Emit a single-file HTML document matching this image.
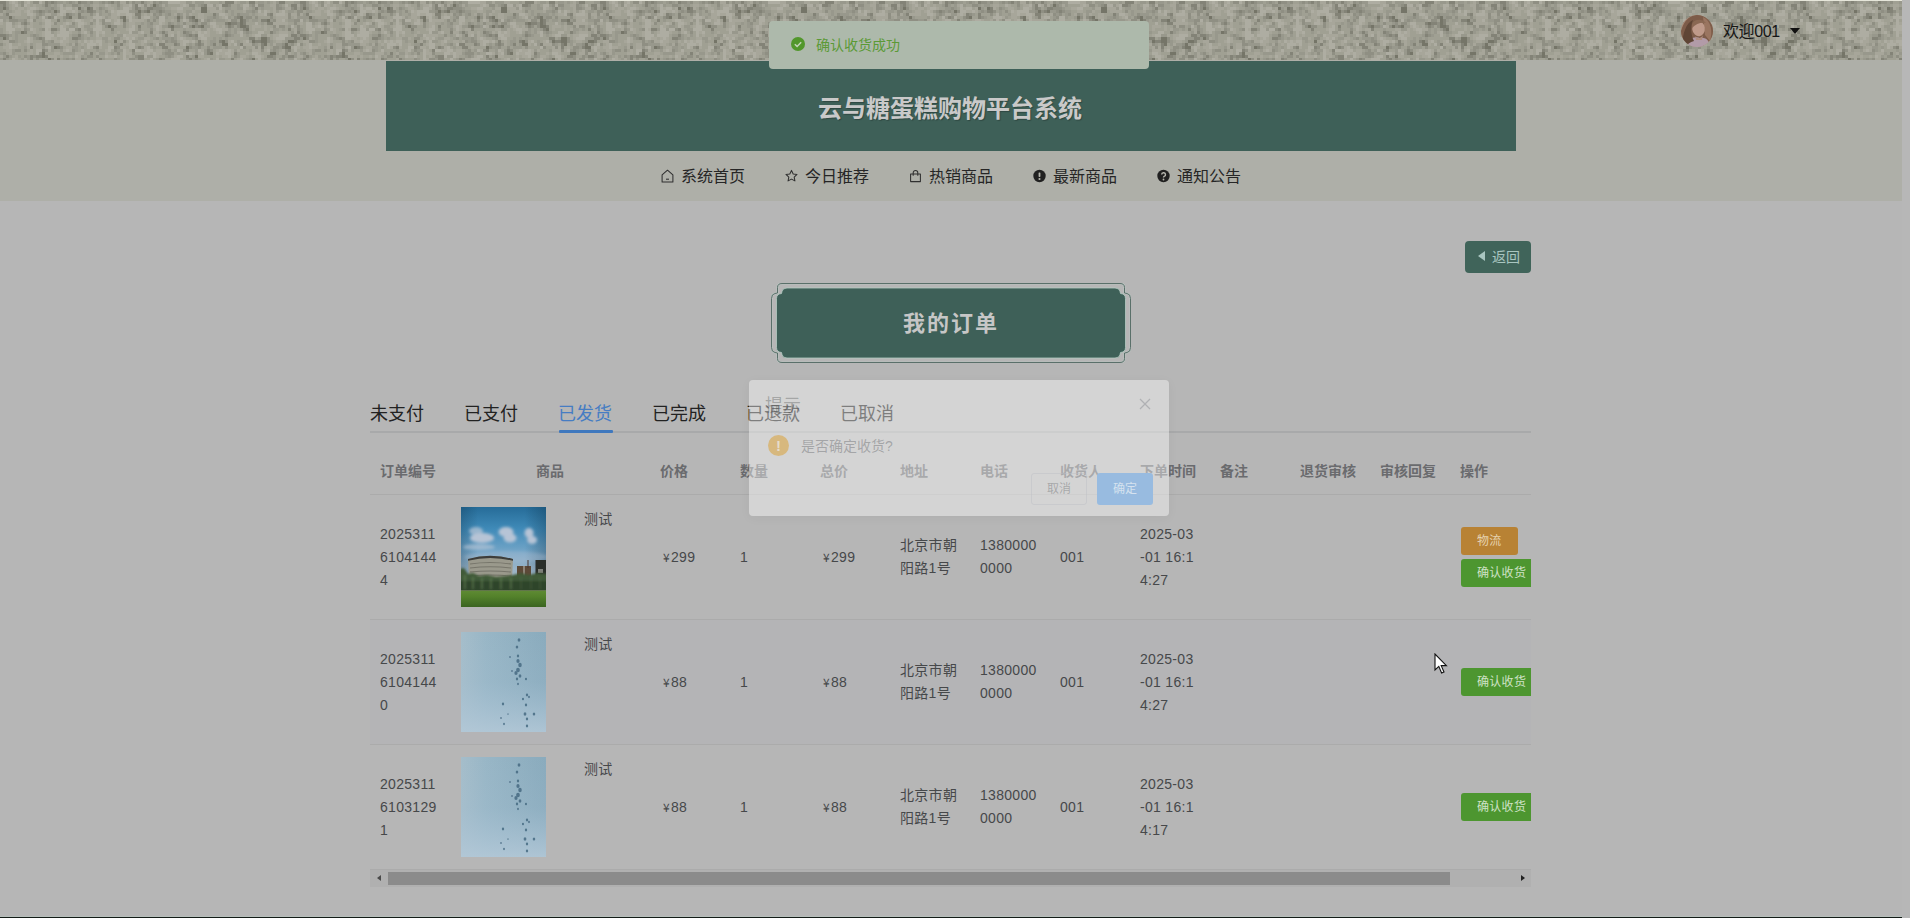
<!DOCTYPE html>
<html lang="zh-CN">
<head>
<meta charset="utf-8">
<title>云与糖蛋糕购物平台系统</title>
<style>
*{box-sizing:border-box;margin:0;padding:0}
html,body{width:1910px;height:918px;overflow:hidden}
body{background:#b7b7b7;font-family:"Liberation Sans","Noto Sans CJK SC",sans-serif;color:#454749;position:relative}
.page{position:absolute;left:0;top:0;width:1902px;height:918px;overflow:hidden;background:#b6b6b6}
/* top strip */
.topline{position:absolute;left:0;top:0;width:1902px;height:1px;background:#e6e6da;z-index:2}
.noise{position:absolute;left:0;top:1px;width:1902px;height:59px;background:#a0a093;overflow:hidden}
.noise svg{position:absolute;left:0;top:0}
.head{position:absolute;left:0;top:60px;width:1902px;height:141px;background:#aeafa8}
.titlebar{position:absolute;left:386px;top:61px;width:1130px;height:90px;background:#3e6058;color:#c9c9c9;font-size:24px;font-weight:700;text-align:center;line-height:90px;letter-spacing:0}
.titlebar span{position:relative;top:3px;left:-1px;text-shadow:1px 1px 1px rgba(0,0,0,.25)}
.user{position:absolute;left:1681px;top:15px;height:32px;display:flex;align-items:center;font-size:16px;color:#161616}
.user .nm{position:relative;top:-1px}
.avatar{width:32px;height:32px;border-radius:50%;overflow:hidden;display:block}
.user .nm{margin-left:10px;letter-spacing:-0.4px}
.user .caret{margin-left:10px;width:0;height:0;border-left:5px solid transparent;border-right:5px solid transparent;border-top:6px solid #111}
/* nav */
.nav{position:absolute;left:641px;top:150px;height:49px;display:flex}
.nav a{display:flex;align-items:center;width:124px;padding:0 20px;height:49px;font-size:16px;color:#262626;text-decoration:none;white-space:nowrap}
.nav a svg{width:13px;height:14px;margin-right:7px;flex:none;position:relative;top:1px}
/* toast */
.toast{position:absolute;left:769px;top:21px;width:380px;height:48px;padding-bottom:2px;border-radius:4px;background:#adb9ab;display:flex;align-items:center;padding-left:22px;font-size:14px;color:#5b9a36;z-index:20}
.toast svg{width:14px;height:14px;margin-right:11px}
/* back button */
.back{position:absolute;left:1465px;top:241px;width:66px;height:32px;padding-bottom:2px;border-radius:4px;background:#40645a;color:#a9c6c0;font-size:14px;display:flex;align-items:center;padding-left:13px}
.back i{width:0;height:0;border-top:5.5px solid transparent;border-bottom:5.5px solid transparent;border-right:7px solid #a9c6c0;margin-right:7px}
/* page title */
.ptitle{position:absolute;left:771px;top:283px;width:360px;height:80px}
.ptitle svg{position:absolute;left:0;top:0}
.ptitle span{position:absolute;left:0;top:1px;width:360px;height:80px;line-height:80px;text-align:center;font-size:22px;font-weight:700;color:#c6c6c6;letter-spacing:2px;padding-left:0px}
/* tabs */
.tabs{position:absolute;left:370px;top:393px;width:1161px;height:40px;border-bottom:2px solid #a8a9aa;display:flex}
.tabs div{width:94px;height:40px;line-height:42px;font-size:18px;color:#222;white-space:nowrap}
.tabs div.on{color:#467dc3}
.tabs .bar{position:absolute;left:189px;top:37px;width:54px;height:3px;background:#3f78be;border-radius:1px}
/* table */
.tbl{position:absolute;left:370px;top:448px;width:1161px;height:440px;overflow:hidden}
table{border-collapse:separate;border-spacing:0;table-layout:fixed;width:1241px;font-size:14px}
th{height:47px;text-align:left;padding:0 10px 2px;color:#6a6b6e;font-weight:700;border-bottom:1px solid #ababab;vertical-align:middle;white-space:nowrap;font-size:14px}
td{height:125px;padding:0 10px;line-height:23px;color:#46484a;border-bottom:1px solid #ababab;vertical-align:middle;word-break:break-all;letter-spacing:.3px}
tr.s td{background:#b4b4b6}
.goods{display:flex;align-items:flex-start;padding-left:1px}
.goods svg{width:85px;height:100px;display:block;flex:none}
.goods span{margin-left:38px;margin-top:1px;line-height:23px}
.btn{display:block;height:28px;line-height:28px;border-radius:3px;font-size:12px;color:#cfe2c6;padding:0 16px;white-space:nowrap}
.ops{display:flex;flex-direction:column;align-items:flex-start;gap:4px;padding-left:1px}
.y{font-family:"Noto Sans CJK SC",sans-serif;margin-left:3px;margin-right:1px;font-size:12px}
.g{background:#4d9630}
.o{background:#b88234;color:#e6d3b0}
.sb{position:absolute;left:0;top:422px;width:1161px;height:17px;background:#b0b0b0}
.sb .th{position:absolute;left:18px;top:2px;width:1062px;height:13px;background:#8b8b8b}
.sb .l,.sb .r{position:absolute;top:5px;width:0;height:0;border-top:3.5px solid transparent;border-bottom:3.5px solid transparent}
.sb .l{left:7px;border-right:4px solid #4a4a4a}
.sb .r{right:6px;border-left:4px solid #222}
/* dialog */
.dlg{position:absolute;left:749px;top:380px;width:420px;height:136px;border-radius:4px;background:rgba(255,255,255,.42);z-index:30;box-shadow:0 2px 12px rgba(0,0,0,.04)}
.dlg .t{position:absolute;left:16px;top:14px;font-size:18px;color:rgba(48,49,51,.3);line-height:24px}
.dlg .x{position:absolute;left:389px;top:17px;width:14px;height:14px}
.dlg .ic{position:absolute;left:19px;top:55px;width:21px;height:21px;border-radius:50%;background:#d7b87e;color:#e6dccb;text-align:center;font-size:15px;font-weight:700;line-height:21px}
.dlg .m{position:absolute;left:52px;top:54px;font-size:14px;line-height:24px;color:rgba(96,98,102,.42)}
.dlg .b1,.dlg .b2{position:absolute;top:93px;width:56px;height:32px;border-radius:3px;font-size:12px;line-height:30px;text-align:center}
.dlg .b1{left:282px;border:1px solid rgba(190,192,198,.5);color:rgba(96,98,102,.4)}
.dlg .b2{left:348px;background:#98bbe0;color:#d5e2ef;line-height:32px}
.bot1{position:absolute;left:0;top:916px;width:1902px;height:1px;background:#b6bfbb}
.bot2{position:absolute;left:0;top:917px;width:1902px;height:1px;background:#141c18}
.cursor{position:absolute;left:1434px;top:653px;width:14px;height:22px;z-index:40}
</style>
</head>
<body>
<div class="page">
<svg width="0" height="0" style="position:absolute"><defs>
<linearGradient id="lb" x1="0" y1="0" x2="1" y2="0"><stop offset="0" stop-color="#a5bdca"/><stop offset=".3" stop-color="#98b6c6"/><stop offset="1" stop-color="#8aabbd"/></linearGradient>
<linearGradient id="lb2" x1="0" y1="0" x2="0" y2="1"><stop offset="0" stop-color="#a9c3d6" stop-opacity="0"/><stop offset=".5" stop-color="#a9c3d6" stop-opacity=".15"/><stop offset="1" stop-color="#b4c9d8" stop-opacity=".85"/></linearGradient>
<filter id="bl3" x="-50%" y="-50%" width="200%" height="200%"><feGaussianBlur stdDeviation=".75"/></filter>
<symbol id="drops" viewBox="0 0 85 100"><rect width="85" height="100" fill="url(#lb)"/><rect width="85" height="100" fill="url(#lb2)"/><g fill="#466a82" opacity=".85" filter="url(#bl3)"><ellipse cx="58" cy="8" rx="1.39" ry="1.74"/><ellipse cx="56" cy="15" rx="1.28" ry="1.59"/><ellipse cx="57" cy="24" rx="1.16" ry="1.45"/><ellipse cx="57" cy="29" rx="1.62" ry="2.03"/><ellipse cx="59" cy="33" rx="1.74" ry="2.17"/><ellipse cx="57" cy="38" rx="1.86" ry="2.32"/><ellipse cx="55" cy="41" rx="1.62" ry="2.03"/><ellipse cx="59" cy="44" rx="1.39" ry="1.74"/><ellipse cx="56" cy="47" rx="1.16" ry="1.45"/><ellipse cx="51" cy="39" rx="0.81" ry="1.01"/><ellipse cx="65" cy="47" rx="1.04" ry="1.30"/><ellipse cx="66" cy="63" rx="1.16" ry="1.45"/><ellipse cx="62" cy="67" rx="1.04" ry="1.30"/><ellipse cx="68" cy="65" rx="0.93" ry="1.16"/><ellipse cx="42" cy="72" rx="1.16" ry="1.45"/><ellipse cx="65" cy="73" rx="1.16" ry="1.45"/><ellipse cx="64" cy="82" rx="1.39" ry="1.74"/><ellipse cx="73" cy="82" rx="1.28" ry="1.59"/><ellipse cx="66" cy="87" rx="1.16" ry="1.45"/><ellipse cx="40" cy="86" rx="0.81" ry="1.01"/><ellipse cx="43" cy="92" rx="0.93" ry="1.16"/><ellipse cx="66" cy="94" rx="1.16" ry="1.45"/><ellipse cx="47" cy="82" rx="0.70" ry="0.87"/><ellipse cx="49" cy="25" rx="0.81" ry="1.01"/><ellipse cx="57" cy="52" rx="0.93" ry="1.16"/></g></symbol>
</defs></svg>
  <div class="topline"></div>
  <div class="noise">
    <svg width="1902" height="59"><defs><pattern id="nzp" width="300" height="60" patternUnits="userSpaceOnUse"><rect width="300" height="60" fill="#a0a093"/><path fill="#747468" d="M153 3h3v3h-3zM3 6h3v3h-3zM78 6h3v3h-3zM87 6h3v3h-3zM201 6h6v3h-6zM54 9h3v3h-3zM138 9h3v3h-3zM147 9h3v3h-3zM201 9h6v3h-6zM9 15h3v3h-3zM69 15h3v3h-3zM123 15h3v3h-3zM177 15h3v3h-3zM192 15h3v3h-3zM240 15h3v3h-3zM123 18h3v3h-3zM195 18h3v3h-3zM240 18h3v3h-3zM267 18h3v3h-3zM228 21h3v3h-3zM240 21h3v3h-3zM108 24h3v3h-3zM171 24h3v3h-3zM192 24h3v3h-3zM201 24h3v3h-3zM240 24h6v3h-6zM246 27h3v3h-3zM21 30h3v3h-3zM3 36h3v3h-3zM261 36h6v3h-6zM114 39h3v3h-3zM222 39h3v3h-3zM252 39h3v3h-3zM261 39h6v3h-6zM288 39h6v3h-6zM222 42h6v3h-6zM264 42h3v3h-3zM285 42h3v3h-3zM54 45h3v3h-3zM186 45h3v3h-3zM285 45h6v3h-6zM42 51h3v3h-3zM210 51h3v3h-3zM270 51h6v3h-6zM42 54h3v3h-3zM195 54h3v3h-3zM48 57h3v3h-3zM252 57h3v3h-3z"/><path fill="#838377" d="M0 0h6v3h-6zM45 0h3v3h-3zM51 0h3v3h-3zM78 0h3v3h-3zM111 0h3v3h-3zM141 0h3v3h-3zM225 0h9v3h-9zM249 0h6v3h-6zM279 0h6v3h-6zM3 3h3v3h-3zM45 3h3v3h-3zM135 3h3v3h-3zM204 3h3v3h-3zM222 3h6v3h-6zM291 3h6v3h-6zM90 6h3v3h-3zM135 6h3v3h-3zM147 6h6v3h-6zM255 6h3v3h-3zM294 6h3v3h-3zM39 9h3v3h-3zM87 9h6v3h-6zM144 9h3v3h-3zM159 9h3v3h-3zM6 12h3v3h-3zM66 12h3v3h-3zM78 12h3v3h-3zM135 12h6v3h-6zM213 12h3v3h-3zM270 12h3v3h-3zM48 15h3v3h-3zM66 15h3v3h-3zM78 15h3v3h-3zM120 15h3v3h-3zM138 15h3v3h-3zM189 15h3v3h-3zM237 15h3v3h-3zM57 18h3v3h-3zM177 18h3v3h-3zM192 18h3v3h-3zM243 18h3v3h-3zM261 18h6v3h-6zM24 21h3v3h-3zM225 21h3v3h-3zM231 21h6v3h-6zM243 21h3v3h-3zM267 21h6v3h-6zM138 24h3v3h-3zM168 24h3v3h-3zM198 24h3v3h-3zM228 24h3v3h-3zM246 24h3v3h-3zM51 27h6v3h-6zM78 27h3v3h-3zM111 27h3v3h-3zM171 27h3v3h-3zM243 27h3v3h-3zM288 27h3v3h-3zM24 30h3v3h-3zM150 30h3v3h-3zM162 30h3v3h-3zM183 30h3v3h-3zM270 30h3v3h-3zM297 30h3v3h-3zM0 33h6v3h-6zM78 33h3v3h-3zM165 33h3v3h-3zM189 33h3v3h-3zM195 33h3v3h-3zM225 33h3v3h-3zM291 33h6v3h-6zM39 36h3v3h-3zM72 36h6v3h-6zM249 36h6v3h-6zM294 36h6v3h-6zM198 39h3v3h-3zM219 39h3v3h-3zM255 39h6v3h-6zM294 39h3v3h-3zM120 42h3v3h-3zM159 42h6v3h-6zM174 42h3v3h-3zM198 42h3v3h-3zM213 42h3v3h-3zM240 42h3v3h-3zM261 42h3v3h-3zM30 45h3v3h-3zM57 45h3v3h-3zM96 45h3v3h-3zM114 45h3v3h-3zM138 45h3v3h-3zM162 45h6v3h-6zM261 45h3v3h-3zM282 45h3v3h-3zM42 48h3v3h-3zM132 48h3v3h-3zM186 48h3v3h-3zM207 48h3v3h-3zM288 48h3v3h-3zM90 51h3v3h-3zM207 51h3v3h-3zM234 51h3v3h-3zM6 54h3v3h-3zM30 54h3v3h-3zM36 54h6v3h-6zM45 54h3v3h-3zM138 54h6v3h-6zM186 54h3v3h-3zM267 54h6v3h-6zM288 54h6v3h-6zM3 57h3v3h-3zM30 57h3v3h-3zM57 57h3v3h-3zM81 57h3v3h-3zM99 57h3v3h-3zM138 57h6v3h-6zM159 57h3v3h-3zM189 57h3v3h-3zM231 57h3v3h-3z"/><path fill="#8f8f83" d="M21 0h3v3h-3zM33 0h6v3h-6zM48 0h3v3h-3zM54 0h3v3h-3zM69 0h3v3h-3zM81 0h6v3h-6zM90 0h3v3h-3zM102 0h3v3h-3zM108 0h3v3h-3zM117 0h3v3h-3zM126 0h3v3h-3zM132 0h3v3h-3zM153 0h3v3h-3zM159 0h3v3h-3zM0 3h3v3h-3zM21 3h3v3h-3zM72 3h6v3h-6zM117 3h3v3h-3zM144 3h3v3h-3zM156 3h3v3h-3zM189 3h6v3h-6zM201 3h3v3h-3zM228 3h3v3h-3zM252 3h3v3h-3zM258 3h6v3h-6zM276 3h3v3h-3zM0 6h3v3h-3zM6 6h3v3h-3zM51 6h3v3h-3zM99 6h3v3h-3zM138 6h3v3h-3zM153 6h9v3h-9zM276 6h6v3h-6zM291 6h3v3h-3zM0 9h3v3h-3zM36 9h3v3h-3zM42 9h3v3h-3zM48 9h3v3h-3zM57 9h3v3h-3zM81 9h3v3h-3zM93 9h3v3h-3zM105 9h3v3h-3zM135 9h3v3h-3zM141 9h3v3h-3zM156 9h3v3h-3zM162 9h3v3h-3zM225 9h3v3h-3zM252 9h3v3h-3zM297 9h3v3h-3zM39 12h3v3h-3zM69 12h3v3h-3zM90 12h3v3h-3zM153 12h3v3h-3zM159 12h3v3h-3zM168 12h3v3h-3zM177 12h3v3h-3zM237 12h3v3h-3zM267 12h3v3h-3zM288 12h3v3h-3zM297 12h3v3h-3zM36 15h3v3h-3zM51 15h3v3h-3zM63 15h3v3h-3zM81 15h3v3h-3zM156 15h3v3h-3zM180 15h3v3h-3zM186 15h3v3h-3zM213 15h3v3h-3zM234 15h3v3h-3zM246 15h6v3h-6zM255 15h3v3h-3zM270 15h3v3h-3zM288 15h3v3h-3zM9 18h9v3h-9zM24 18h3v3h-3zM33 18h3v3h-3zM102 18h3v3h-3zM147 18h3v3h-3zM153 18h3v3h-3zM189 18h3v3h-3zM207 18h3v3h-3zM231 18h6v3h-6zM273 18h3v3h-3zM294 18h6v3h-6zM21 21h3v3h-3zM54 21h3v3h-3zM72 21h3v3h-3zM90 21h3v3h-3zM102 21h3v3h-3zM123 21h3v3h-3zM150 21h3v3h-3zM168 21h3v3h-3zM183 21h3v3h-3zM195 21h3v3h-3zM201 21h6v3h-6zM237 21h3v3h-3zM294 21h3v3h-3zM105 24h3v3h-3zM111 24h6v3h-6zM123 24h3v3h-3zM174 24h6v3h-6zM189 24h3v3h-3zM195 24h3v3h-3zM231 24h3v3h-3zM237 24h3v3h-3zM273 24h3v3h-3zM279 24h6v3h-6zM297 24h3v3h-3zM24 27h3v3h-3zM42 27h3v3h-3zM75 27h3v3h-3zM138 27h3v3h-3zM150 27h3v3h-3zM297 27h3v3h-3zM90 30h3v3h-3zM186 30h3v3h-3zM225 30h3v3h-3zM246 30h3v3h-3zM6 33h3v3h-3zM33 33h3v3h-3zM144 33h3v3h-3zM186 33h3v3h-3zM192 33h3v3h-3zM228 33h3v3h-3zM6 36h3v3h-3zM36 36h3v3h-3zM42 36h3v3h-3zM78 36h3v3h-3zM114 36h6v3h-6zM156 36h3v3h-3zM171 36h3v3h-3zM195 36h3v3h-3zM267 36h3v3h-3zM9 39h6v3h-6zM42 39h3v3h-3zM51 39h3v3h-3zM123 39h3v3h-3zM165 39h3v3h-3zM171 39h6v3h-6zM225 39h3v3h-3zM267 39h3v3h-3zM0 42h3v3h-3zM42 42h6v3h-6zM75 42h3v3h-3zM150 42h3v3h-3zM177 42h3v3h-3zM195 42h3v3h-3zM201 42h3v3h-3zM252 42h3v3h-3zM282 42h3v3h-3zM291 42h3v3h-3zM60 45h3v3h-3zM93 45h3v3h-3zM117 45h3v3h-3zM141 45h3v3h-3zM189 45h3v3h-3zM198 45h3v3h-3zM207 45h3v3h-3zM225 45h3v3h-3zM243 45h3v3h-3zM255 45h3v3h-3zM273 45h6v3h-6zM15 48h6v3h-6zM24 48h3v3h-3zM45 48h3v3h-3zM72 48h3v3h-3zM114 48h3v3h-3zM168 48h3v3h-3zM183 48h3v3h-3zM210 48h3v3h-3zM261 48h3v3h-3zM273 48h3v3h-3zM285 48h3v3h-3zM3 51h3v3h-3zM39 51h3v3h-3zM117 51h3v3h-3zM132 51h3v3h-3zM165 51h9v3h-9zM285 51h3v3h-3zM24 54h3v3h-3zM33 54h3v3h-3zM87 54h6v3h-6zM96 54h3v3h-3zM135 54h3v3h-3zM168 54h3v3h-3zM234 54h3v3h-3zM273 54h3v3h-3zM282 54h3v3h-3zM36 57h3v3h-3zM51 57h3v3h-3zM66 57h3v3h-3zM72 57h3v3h-3zM84 57h3v3h-3zM114 57h3v3h-3zM129 57h6v3h-6zM162 57h3v3h-3zM186 57h3v3h-3zM195 57h3v3h-3zM249 57h3v3h-3zM273 57h3v3h-3zM279 57h6v3h-6z"/><path fill="#98988c" d="M6 0h3v3h-3zM18 0h3v3h-3zM57 0h6v3h-6zM66 0h3v3h-3zM72 0h3v3h-3zM87 0h3v3h-3zM99 0h3v3h-3zM105 0h3v3h-3zM114 0h3v3h-3zM135 0h6v3h-6zM144 0h3v3h-3zM156 0h3v3h-3zM162 0h6v3h-6zM186 0h6v3h-6zM195 0h9v3h-9zM219 0h3v3h-3zM240 0h6v3h-6zM258 0h6v3h-6zM267 0h3v3h-3zM276 0h3v3h-3zM294 0h6v3h-6zM6 3h3v3h-3zM42 3h3v3h-3zM48 3h3v3h-3zM54 3h3v3h-3zM63 3h3v3h-3zM78 3h3v3h-3zM84 3h6v3h-6zM132 3h3v3h-3zM150 3h3v3h-3zM159 3h3v3h-3zM165 3h3v3h-3zM198 3h3v3h-3zM213 3h3v3h-3zM237 3h3v3h-3zM249 3h3v3h-3zM279 3h3v3h-3zM45 6h6v3h-6zM54 6h3v3h-3zM81 6h3v3h-3zM102 6h3v3h-3zM117 6h3v3h-3zM132 6h3v3h-3zM144 6h3v3h-3zM162 6h3v3h-3zM192 6h3v3h-3zM216 6h3v3h-3zM225 6h6v3h-6zM237 6h6v3h-6zM252 6h3v3h-3zM261 6h3v3h-3zM282 6h3v3h-3zM6 9h6v3h-6zM33 9h3v3h-3zM45 9h3v3h-3zM51 9h3v3h-3zM78 9h3v3h-3zM84 9h3v3h-3zM99 9h3v3h-3zM129 9h6v3h-6zM150 9h6v3h-6zM165 9h6v3h-6zM186 9h6v3h-6zM231 9h3v3h-3zM246 9h6v3h-6zM255 9h3v3h-3zM276 9h3v3h-3zM288 9h6v3h-6zM3 12h3v3h-3zM36 12h3v3h-3zM42 12h3v3h-3zM51 12h6v3h-6zM72 12h3v3h-3zM99 12h3v3h-3zM108 12h3v3h-3zM156 12h3v3h-3zM165 12h3v3h-3zM180 12h3v3h-3zM186 12h3v3h-3zM216 12h3v3h-3zM231 12h3v3h-3zM240 12h9v3h-9zM252 12h3v3h-3zM0 15h9v3h-9zM12 15h3v3h-3zM27 15h3v3h-3zM45 15h3v3h-3zM84 15h3v3h-3zM105 15h3v3h-3zM135 15h3v3h-3zM153 15h3v3h-3zM165 15h3v3h-3zM174 15h3v3h-3zM207 15h6v3h-6zM216 15h3v3h-3zM228 15h3v3h-3zM243 15h3v3h-3zM297 15h3v3h-3zM3 18h3v3h-3zM18 18h6v3h-6zM63 18h3v3h-3zM93 18h3v3h-3zM126 18h3v3h-3zM198 18h3v3h-3zM204 18h3v3h-3zM210 18h3v3h-3zM216 18h9v3h-9zM246 18h3v3h-3zM252 18h6v3h-6zM270 18h3v3h-3zM288 18h6v3h-6zM12 21h3v3h-3zM27 21h3v3h-3zM39 21h3v3h-3zM105 21h6v3h-6zM141 21h3v3h-3zM147 21h3v3h-3zM171 21h3v3h-3zM177 21h3v3h-3zM192 21h3v3h-3zM261 21h3v3h-3zM24 24h3v3h-3zM69 24h6v3h-6zM84 24h6v3h-6zM147 24h6v3h-6zM162 24h6v3h-6zM180 24h3v3h-3zM204 24h6v3h-6zM225 24h3v3h-3zM288 24h3v3h-3zM0 27h3v3h-3zM27 27h3v3h-3zM39 27h3v3h-3zM57 27h3v3h-3zM66 27h3v3h-3zM87 27h6v3h-6zM183 27h3v3h-3zM201 27h6v3h-6zM228 27h3v3h-3zM234 27h3v3h-3zM240 27h3v3h-3zM273 27h6v3h-6zM282 27h3v3h-3zM0 30h3v3h-3zM15 30h6v3h-6zM51 30h3v3h-3zM78 30h3v3h-3zM111 30h3v3h-3zM132 30h6v3h-6zM159 30h3v3h-3zM165 30h3v3h-3zM189 30h3v3h-3zM228 30h3v3h-3zM234 30h3v3h-3zM243 30h3v3h-3zM249 30h3v3h-3zM273 30h3v3h-3zM291 30h3v3h-3zM9 33h3v3h-3zM15 33h3v3h-3zM30 33h3v3h-3zM36 33h3v3h-3zM72 33h6v3h-6zM81 33h3v3h-3zM90 33h3v3h-3zM117 33h6v3h-6zM150 33h3v3h-3zM162 33h3v3h-3zM174 33h3v3h-3zM183 33h3v3h-3zM222 33h3v3h-3zM231 33h3v3h-3zM246 33h3v3h-3zM261 33h6v3h-6zM297 33h3v3h-3zM0 36h3v3h-3zM15 36h3v3h-3zM33 36h3v3h-3zM81 36h3v3h-3zM87 36h3v3h-3zM102 36h6v3h-6zM138 36h6v3h-6zM153 36h3v3h-3zM162 36h9v3h-9zM174 36h3v3h-3zM192 36h3v3h-3zM213 36h3v3h-3zM219 36h3v3h-3zM225 36h3v3h-3zM258 36h3v3h-3zM285 36h9v3h-9zM15 39h3v3h-3zM48 39h3v3h-3zM75 39h3v3h-3zM105 39h3v3h-3zM132 39h6v3h-6zM168 39h3v3h-3zM210 39h6v3h-6zM237 39h3v3h-3zM249 39h3v3h-3zM270 39h3v3h-3zM285 39h3v3h-3zM30 42h3v3h-3zM48 42h12v3h-12zM69 42h3v3h-3zM114 42h6v3h-6zM147 42h3v3h-3zM189 42h3v3h-3zM210 42h3v3h-3zM219 42h3v3h-3zM237 42h3v3h-3zM255 42h3v3h-3zM270 42h3v3h-3zM276 42h6v3h-6zM288 42h3v3h-3zM24 45h3v3h-3zM42 45h3v3h-3zM51 45h3v3h-3zM72 45h6v3h-6zM81 45h3v3h-3zM135 45h3v3h-3zM153 45h3v3h-3zM192 45h6v3h-6zM213 45h9v3h-9zM279 45h3v3h-3zM12 48h3v3h-3zM51 48h3v3h-3zM60 48h3v3h-3zM75 48h3v3h-3zM96 48h3v3h-3zM117 48h6v3h-6zM165 48h3v3h-3zM174 48h3v3h-3zM195 48h3v3h-3zM204 48h3v3h-3zM234 48h3v3h-3zM249 48h3v3h-3zM270 48h3v3h-3zM276 48h3v3h-3zM0 51h3v3h-3zM12 51h3v3h-3zM63 51h12v3h-12zM84 51h3v3h-3zM99 51h6v3h-6zM111 51h3v3h-3zM162 51h3v3h-3zM177 51h3v3h-3zM195 51h3v3h-3zM204 51h3v3h-3zM237 51h3v3h-3zM276 51h3v3h-3zM294 51h3v3h-3zM3 54h3v3h-3zM9 54h3v3h-3zM18 54h3v3h-3zM27 54h3v3h-3zM81 54h3v3h-3zM147 54h6v3h-6zM165 54h3v3h-3zM171 54h3v3h-3zM192 54h3v3h-3zM237 54h3v3h-3zM249 54h3v3h-3zM285 54h3v3h-3zM294 54h3v3h-3zM0 57h3v3h-3zM6 57h3v3h-3zM21 57h3v3h-3zM27 57h3v3h-3zM45 57h3v3h-3zM63 57h3v3h-3zM69 57h3v3h-3zM102 57h3v3h-3zM117 57h3v3h-3zM135 57h3v3h-3zM156 57h3v3h-3zM192 57h3v3h-3zM198 57h3v3h-3zM210 57h3v3h-3zM219 57h6v3h-6zM246 57h3v3h-3zM264 57h9v3h-9zM288 57h6v3h-6z"/><path fill="#a7a69a" d="M9 0h3v3h-3zM15 0h3v3h-3zM24 0h3v3h-3zM120 0h6v3h-6zM150 0h3v3h-3zM180 0h6v3h-6zM192 0h3v3h-3zM204 0h6v3h-6zM234 0h3v3h-3zM273 0h3v3h-3zM12 3h3v3h-3zM27 3h3v3h-3zM33 3h3v3h-3zM57 3h3v3h-3zM93 3h6v3h-6zM108 3h3v3h-3zM123 3h6v3h-6zM141 3h3v3h-3zM147 3h3v3h-3zM162 3h3v3h-3zM180 3h3v3h-3zM186 3h3v3h-3zM216 3h3v3h-3zM270 3h6v3h-6zM297 3h3v3h-3zM12 6h3v3h-3zM18 6h6v3h-6zM27 6h3v3h-3zM36 6h3v3h-3zM63 6h3v3h-3zM75 6h3v3h-3zM93 6h3v3h-3zM108 6h6v3h-6zM129 6h3v3h-3zM171 6h6v3h-6zM195 6h6v3h-6zM207 6h9v3h-9zM246 6h3v3h-3zM273 6h3v3h-3zM285 6h6v3h-6zM15 9h6v3h-6zM24 9h3v3h-3zM30 9h3v3h-3zM66 9h6v3h-6zM75 9h3v3h-3zM114 9h3v3h-3zM177 9h6v3h-6zM192 9h3v3h-3zM210 9h12v3h-12zM243 9h3v3h-3zM267 9h3v3h-3zM273 9h3v3h-3zM279 9h3v3h-3zM0 12h3v3h-3zM9 12h12v3h-12zM33 12h3v3h-3zM45 12h6v3h-6zM57 12h3v3h-3zM63 12h3v3h-3zM111 12h6v3h-6zM120 12h6v3h-6zM132 12h3v3h-3zM144 12h3v3h-3zM150 12h3v3h-3zM174 12h3v3h-3zM183 12h3v3h-3zM189 12h3v3h-3zM198 12h6v3h-6zM225 12h3v3h-3zM258 12h6v3h-6zM273 12h3v3h-3zM285 12h3v3h-3zM291 12h6v3h-6zM30 15h3v3h-3zM102 15h3v3h-3zM111 15h6v3h-6zM126 15h3v3h-3zM141 15h3v3h-3zM183 15h3v3h-3zM198 15h6v3h-6zM222 15h3v3h-3zM276 15h12v3h-12zM294 15h3v3h-3zM27 18h3v3h-3zM42 18h3v3h-3zM72 18h3v3h-3zM81 18h3v3h-3zM90 18h3v3h-3zM114 18h3v3h-3zM132 18h12v3h-12zM171 18h3v3h-3zM186 18h3v3h-3zM228 18h3v3h-3zM276 18h6v3h-6zM0 21h3v3h-3zM18 21h3v3h-3zM30 21h3v3h-3zM51 21h3v3h-3zM63 21h3v3h-3zM69 21h3v3h-3zM84 21h3v3h-3zM99 21h3v3h-3zM120 21h3v3h-3zM129 21h6v3h-6zM162 21h3v3h-3zM273 21h15v3h-15zM15 24h3v3h-3zM21 24h3v3h-3zM27 24h6v3h-6zM42 24h3v3h-3zM63 24h3v3h-3zM81 24h3v3h-3zM93 24h3v3h-3zM129 24h3v3h-3zM153 24h3v3h-3zM159 24h3v3h-3zM186 24h3v3h-3zM210 24h3v3h-3zM216 24h3v3h-3zM222 24h3v3h-3zM252 24h9v3h-9zM264 24h3v3h-3zM276 24h3v3h-3zM21 27h3v3h-3zM33 27h3v3h-3zM48 27h3v3h-3zM81 27h3v3h-3zM126 27h3v3h-3zM159 27h3v3h-3zM165 27h6v3h-6zM195 27h6v3h-6zM207 27h3v3h-3zM213 27h3v3h-3zM222 27h6v3h-6zM252 27h3v3h-3zM264 27h3v3h-3zM270 27h3v3h-3zM294 27h3v3h-3zM6 30h3v3h-3zM33 30h3v3h-3zM42 30h3v3h-3zM57 30h3v3h-3zM69 30h3v3h-3zM81 30h3v3h-3zM99 30h3v3h-3zM117 30h3v3h-3zM138 30h3v3h-3zM153 30h6v3h-6zM168 30h6v3h-6zM177 30h3v3h-3zM192 30h3v3h-3zM201 30h3v3h-3zM207 30h3v3h-3zM216 30h3v3h-3zM237 30h3v3h-3zM279 30h9v3h-9zM294 30h3v3h-3zM42 33h3v3h-3zM87 33h3v3h-3zM102 33h3v3h-3zM114 33h3v3h-3zM126 33h12v3h-12zM159 33h3v3h-3zM168 33h3v3h-3zM177 33h3v3h-3zM204 33h6v3h-6zM252 33h3v3h-3zM267 33h3v3h-3zM273 33h6v3h-6zM9 36h3v3h-3zM30 36h3v3h-3zM51 36h6v3h-6zM60 36h3v3h-3zM66 36h3v3h-3zM96 36h6v3h-6zM108 36h3v3h-3zM123 36h3v3h-3zM129 36h3v3h-3zM144 36h6v3h-6zM177 36h3v3h-3zM183 36h3v3h-3zM198 36h3v3h-3zM273 36h3v3h-3zM3 39h6v3h-6zM24 39h3v3h-3zM30 39h3v3h-3zM54 39h6v3h-6zM63 39h6v3h-6zM78 39h3v3h-3zM87 39h3v3h-3zM93 39h3v3h-3zM120 39h3v3h-3zM141 39h3v3h-3zM153 39h6v3h-6zM162 39h3v3h-3zM180 39h3v3h-3zM189 39h3v3h-3zM204 39h3v3h-3zM228 39h3v3h-3zM243 39h3v3h-3zM276 39h6v3h-6zM6 42h3v3h-3zM18 42h3v3h-3zM27 42h3v3h-3zM36 42h6v3h-6zM60 42h6v3h-6zM72 42h3v3h-3zM81 42h3v3h-3zM96 42h3v3h-3zM108 42h3v3h-3zM126 42h3v3h-3zM141 42h3v3h-3zM180 42h3v3h-3zM204 42h3v3h-3zM228 42h3v3h-3zM243 42h9v3h-9zM273 42h3v3h-3zM3 45h6v3h-6zM12 45h6v3h-6zM27 45h3v3h-3zM36 45h6v3h-6zM45 45h3v3h-3zM66 45h6v3h-6zM90 45h3v3h-3zM99 45h3v3h-3zM120 45h6v3h-6zM144 45h3v3h-3zM171 45h3v3h-3zM252 45h3v3h-3zM258 45h3v3h-3zM267 45h3v3h-3zM291 45h3v3h-3zM297 45h3v3h-3zM6 48h6v3h-6zM30 48h3v3h-3zM48 48h3v3h-3zM63 48h3v3h-3zM69 48h3v3h-3zM105 48h3v3h-3zM126 48h3v3h-3zM141 48h6v3h-6zM156 48h6v3h-6zM180 48h3v3h-3zM201 48h3v3h-3zM216 48h3v3h-3zM222 48h6v3h-6zM231 48h3v3h-3zM237 48h3v3h-3zM252 48h9v3h-9zM264 48h3v3h-3zM282 48h3v3h-3zM9 51h3v3h-3zM27 51h6v3h-6zM54 51h6v3h-6zM75 51h9v3h-9zM96 51h3v3h-3zM105 51h3v3h-3zM126 51h6v3h-6zM150 51h3v3h-3zM156 51h6v3h-6zM192 51h3v3h-3zM198 51h3v3h-3zM219 51h6v3h-6zM231 51h3v3h-3zM246 51h3v3h-3zM258 51h3v3h-3zM279 51h6v3h-6zM288 51h3v3h-3zM297 51h3v3h-3zM0 54h3v3h-3zM15 54h3v3h-3zM48 54h9v3h-9zM60 54h3v3h-3zM69 54h3v3h-3zM78 54h3v3h-3zM108 54h6v3h-6zM129 54h3v3h-3zM156 54h3v3h-3zM174 54h3v3h-3zM198 54h6v3h-6zM216 54h3v3h-3zM222 54h6v3h-6zM240 54h6v3h-6zM261 54h3v3h-3zM297 54h3v3h-3zM15 57h3v3h-3zM24 57h3v3h-3zM54 57h3v3h-3zM75 57h6v3h-6zM96 57h3v3h-3zM126 57h3v3h-3zM165 57h6v3h-6zM204 57h3v3h-3zM237 57h3v3h-3zM276 57h3v3h-3zM285 57h3v3h-3z"/><path fill="#aeada2" d="M12 0h3v3h-3zM27 0h3v3h-3zM39 0h3v3h-3zM168 0h12v3h-12zM15 3h3v3h-3zM24 3h3v3h-3zM60 3h3v3h-3zM105 3h3v3h-3zM129 3h3v3h-3zM138 3h3v3h-3zM183 3h3v3h-3zM207 3h6v3h-6zM219 3h3v3h-3zM243 3h6v3h-6zM255 3h3v3h-3zM285 3h3v3h-3zM30 6h6v3h-6zM60 6h3v3h-3zM66 6h6v3h-6zM123 6h6v3h-6zM177 6h6v3h-6zM219 6h3v3h-3zM243 6h3v3h-3zM27 9h3v3h-3zM60 9h6v3h-6zM72 9h3v3h-3zM111 9h3v3h-3zM117 9h12v3h-12zM258 9h3v3h-3zM264 9h3v3h-3zM282 9h3v3h-3zM27 12h6v3h-6zM60 12h3v3h-3zM96 12h3v3h-3zM117 12h3v3h-3zM126 12h6v3h-6zM219 12h6v3h-6zM264 12h3v3h-3zM276 12h9v3h-9zM42 15h3v3h-3zM54 15h3v3h-3zM93 15h9v3h-9zM129 15h3v3h-3zM144 15h6v3h-6zM159 15h6v3h-6zM225 15h3v3h-3zM0 18h3v3h-3zM30 18h3v3h-3zM45 18h6v3h-6zM75 18h6v3h-6zM96 18h3v3h-3zM105 18h6v3h-6zM117 18h3v3h-3zM129 18h3v3h-3zM159 18h6v3h-6zM183 18h3v3h-3zM201 18h3v3h-3zM282 18h3v3h-3zM6 21h6v3h-6zM45 21h6v3h-6zM66 21h3v3h-3zM78 21h6v3h-6zM96 21h3v3h-3zM114 21h6v3h-6zM159 21h3v3h-3zM210 21h6v3h-6zM255 21h3v3h-3zM6 24h6v3h-6zM18 24h3v3h-3zM45 24h6v3h-6zM60 24h3v3h-3zM78 24h3v3h-3zM96 24h6v3h-6zM132 24h3v3h-3zM156 24h3v3h-3zM183 24h3v3h-3zM213 24h3v3h-3zM291 24h3v3h-3zM6 27h9v3h-9zM30 27h3v3h-3zM45 27h3v3h-3zM60 27h6v3h-6zM69 27h6v3h-6zM93 27h9v3h-9zM129 27h6v3h-6zM156 27h3v3h-3zM216 27h6v3h-6zM9 30h3v3h-3zM45 30h6v3h-6zM60 30h9v3h-9zM84 30h3v3h-3zM96 30h3v3h-3zM102 30h3v3h-3zM129 30h3v3h-3zM141 30h3v3h-3zM198 30h3v3h-3zM204 30h3v3h-3zM219 30h3v3h-3zM240 30h3v3h-3zM258 30h6v3h-6zM45 33h9v3h-9zM57 33h12v3h-12zM96 33h3v3h-3zM123 33h3v3h-3zM156 33h3v3h-3zM171 33h3v3h-3zM198 33h6v3h-6zM240 33h3v3h-3zM255 33h6v3h-6zM279 33h9v3h-9zM27 36h3v3h-3zM45 36h6v3h-6zM63 36h3v3h-3zM126 36h3v3h-3zM132 36h3v3h-3zM180 36h3v3h-3zM201 36h6v3h-6zM276 36h9v3h-9zM27 39h3v3h-3zM60 39h3v3h-3zM84 39h3v3h-3zM90 39h3v3h-3zM96 39h6v3h-6zM129 39h3v3h-3zM144 39h3v3h-3zM183 39h6v3h-6zM192 39h3v3h-3zM231 39h3v3h-3zM246 39h3v3h-3zM9 42h3v3h-3zM87 42h9v3h-9zM99 42h3v3h-3zM129 42h6v3h-6zM156 42h3v3h-3zM183 42h3v3h-3zM234 42h3v3h-3zM297 42h3v3h-3zM9 45h3v3h-3zM48 45h3v3h-3zM87 45h3v3h-3zM108 45h6v3h-6zM129 45h6v3h-6zM147 45h3v3h-3zM240 45h3v3h-3zM294 45h3v3h-3zM36 48h6v3h-6zM66 48h3v3h-3zM81 48h3v3h-3zM108 48h3v3h-3zM123 48h3v3h-3zM135 48h6v3h-6zM147 48h6v3h-6zM177 48h3v3h-3zM198 48h3v3h-3zM219 48h3v3h-3zM228 48h3v3h-3zM267 48h3v3h-3zM294 48h3v3h-3zM36 51h3v3h-3zM123 51h3v3h-3zM144 51h6v3h-6zM153 51h3v3h-3zM186 51h6v3h-6zM201 51h3v3h-3zM216 51h3v3h-3zM225 51h6v3h-6zM252 51h6v3h-6zM75 54h3v3h-3zM105 54h3v3h-3zM114 54h3v3h-3zM123 54h3v3h-3zM144 54h3v3h-3zM153 54h3v3h-3zM177 54h6v3h-6zM228 54h3v3h-3zM255 54h6v3h-6zM12 57h3v3h-3zM123 57h3v3h-3zM150 57h3v3h-3zM171 57h9v3h-9zM207 57h3v3h-3zM216 57h3v3h-3zM240 57h3v3h-3zM258 57h3v3h-3zM294 57h3v3h-3z"/></pattern><filter id="nzb"><feGaussianBlur stdDeviation=".7"/></filter></defs><rect width="1902" height="60" fill="url(#nzp)" filter="url(#nzb)"/></svg>
  </div>
  <div class="head"></div>
  <div class="titlebar"><span>云与糖蛋糕购物平台系统</span></div>

  <div class="user">
    <svg class="avatar" viewBox="0 0 32 32">
      <defs><filter id="avb" x="-10%" y="-10%" width="120%" height="120%"><feGaussianBlur stdDeviation=".5"/></filter></defs>
      <rect width="32" height="32" fill="#a98b78"/>
      <g filter="url(#avb)">
      <path d="M-2 34 C-2 10 6 0 17 0 C28 0 34 8 32 20 L30 34 Z" fill="#7d5c49"/>
      <path d="M22 2 C30 6 32 16 29 26 L24 20 Z" fill="#9a7560"/>
      <ellipse cx="17.5" cy="13.5" rx="6.3" ry="7.8" fill="#bf9a8a" transform="rotate(-8 17.5 13.5)"/>
      <path d="M11 9 C13 4 21 3 25 8 C21 7 15 8 11 13 Z" fill="#8a6853"/>
      <path d="M4 34 C6 23 14 21 19 23 C26 22 29 27 30 34 Z" fill="#b29ba8"/>
      <path d="M1 30 C2 18 5 8 12 5 C9 12 10 20 13 26 C9 27 6 29 4 33 Z" fill="#5f4435"/>
      <path d="M14 21 C16 24 20 24 22 20 L21 25 L15 25 Z" fill="#b08d7f"/>
      </g>
    </svg>
    <span class="nm">欢迎001</span><span class="caret"></span>
  </div>

  <div class="nav">
    <a><svg viewBox="0 0 13 14" fill="none" stroke="#303030" stroke-width="1.05" stroke-linejoin="round"><path d="M1.1 5.9 L6.5 1.2 L11.9 5.9 V12.9 H1.1 Z"/><path d="M5 10.2 H8"/></svg>系统首页</a>
    <a><svg viewBox="0 0 13 14" fill="none" stroke="#303030" stroke-width="1.05" stroke-linejoin="round"><path d="M6.5 1.4 L8.2 4.9 L12 5.4 L9.2 8.1 L9.9 11.9 L6.5 10.1 L3.1 11.9 L3.8 8.1 L1 5.4 L4.8 4.9 Z"/></svg>今日推荐</a>
    <a><svg viewBox="0 0 13 14" fill="none" stroke="#303030" stroke-width="1.05" stroke-linejoin="round"><path d="M1.6 5 H11.4 V12.6 H1.6 Z"/><path d="M4.2 6.8 V3.8 A2.3 2.3 0 0 1 8.8 3.8 V6.8"/></svg>热销商品</a>
    <a><svg viewBox="0 0 13 14"><circle cx="6.5" cy="7" r="6.2" fill="#202020"/><rect x="5.6" y="3.4" width="1.8" height="4.6" rx=".7" fill="#b6b6ae"/><circle cx="6.5" cy="10" r="1.05" fill="#b6b6ae"/></svg>最新商品</a>
    <a><svg viewBox="0 0 13 14"><circle cx="6.5" cy="7" r="6.2" fill="#202020"/><path d="M4.7 5.6 A1.9 1.9 0 1 1 7.2 7.4 Q6.5 7.7 6.5 8.6" fill="none" stroke="#b6b6ae" stroke-width="1.4"/><circle cx="6.5" cy="10.5" r=".9" fill="#b6b6ae"/></svg>通知公告</a>
  </div>

  <div class="back"><i></i>返回</div>

  <div class="ptitle">
    <svg width="360" height="80" viewBox="0 0 360 80">
      <defs><path id="fr" d="M11 .5 H349 Q353.5 .5 353.5 4.5 V10 L356 10.5 Q359.5 11 359.5 15.5 V64.5 Q359.5 69 356 69.5 L353.5 70 V75.5 Q353.5 79.5 349 79.5 H11 Q6.5 79.5 6.5 75.5 V70 L4 69.5 Q.5 69 .5 64.5 V15.5 Q.5 11 4 10.5 L6.5 10 V4.5 Q6.5 .5 11 .5 Z"/></defs>
      <use href="#fr" fill="none" stroke="#bdd0c9" stroke-width="2.2" opacity=".5"/>
      <use href="#fr" fill="none" stroke="#4f6660" stroke-width=".9"/>
      <path d="M16 5 H344 Q348.5 5 349 8.5 L349.5 10.5 Q354.5 11 354.5 15.5 V64.5 Q354.5 69 349.5 69.5 L349 71.5 Q348.5 75 344 75 H16 Q11.5 75 11 71.5 L10.5 69.5 Q5.5 69 5.5 64.5 V15.5 Q5.5 11 10.5 10.5 L11 8.5 Q11.5 5 16 5 Z" fill="#3e6058" stroke="#b4cbc3" stroke-width=".8"/>
    </svg>
    <span>我的订单</span>
  </div>

  <div class="tabs">
    <div>未支付</div><div>已支付</div><div class="on">已发货</div><div>已完成</div><div>已退款</div><div>已取消</div>
    <span class="bar"></span>
  </div>

  <div class="tbl">
    <table>
      <colgroup><col style="width:80px"><col style="width:200px"><col style="width:80px"><col style="width:80px"><col style="width:80px"><col style="width:80px"><col style="width:80px"><col style="width:80px"><col style="width:80px"><col style="width:80px"><col style="width:80px"><col style="width:80px"><col style="width:201px"></colgroup>
      <thead><tr><th>订单编号</th><th style="text-align:center">商品</th><th>价格</th><th>数量</th><th>总价</th><th>地址</th><th>电话</th><th>收货人</th><th>下单时间</th><th>备注</th><th>退货审核</th><th>审核回复</th><th>操作</th></tr></thead>
      <tbody>
        <tr>
          <td>2025311<br>6104144<br>4</td>
          <td><div class="goods"><svg viewBox="0 0 85 100">
<defs>
<linearGradient id="sky" x1="0" y1="0" x2="0" y2="1"><stop offset="0" stop-color="#266c98"/><stop offset=".3" stop-color="#3f8ab8"/><stop offset=".6" stop-color="#6fa3c6"/><stop offset=".85" stop-color="#98b3c8"/><stop offset="1" stop-color="#a3b6c4"/></linearGradient>
<linearGradient id="grs" x1="0" y1="0" x2="0" y2="1"><stop offset="0" stop-color="#5f8a34"/><stop offset=".35" stop-color="#54822b"/><stop offset="1" stop-color="#3a6420"/></linearGradient>
<linearGradient id="vg" x1="0" y1="0" x2="1" y2="0"><stop offset="0" stop-color="#0a2a40" stop-opacity=".25"/><stop offset=".2" stop-color="#0a2a40" stop-opacity="0"/><stop offset=".75" stop-color="#0a2a40" stop-opacity="0"/><stop offset="1" stop-color="#0a2a40" stop-opacity=".3"/></linearGradient>
<filter id="bl1" x="-20%" y="-20%" width="140%" height="140%"><feGaussianBlur stdDeviation="1.5"/></filter>
<filter id="bl2" x="-20%" y="-20%" width="140%" height="140%"><feGaussianBlur stdDeviation=".6"/></filter>
<filter id="bl4" x="-20%" y="-20%" width="140%" height="140%"><feGaussianBlur stdDeviation="1"/></filter>
</defs>
<rect width="85" height="72" fill="url(#sky)"/>
<rect width="85" height="72" fill="url(#vg)"/>
<g filter="url(#bl1)" fill="#b7c4d6">
<ellipse cx="21" cy="31" rx="12" ry="5"/><ellipse cx="15" cy="24" rx="7" ry="4" opacity=".75"/><ellipse cx="18" cy="40" rx="16" ry="3" opacity=".65"/>
<ellipse cx="45" cy="25" rx="7.5" ry="5"/><ellipse cx="49" cy="31" rx="6.5" ry="4.5"/>
<ellipse cx="68" cy="26" rx="4.5" ry="5"/><ellipse cx="71" cy="33" rx="5" ry="4"/>
<ellipse cx="45" cy="50" rx="42" ry="6" opacity=".3"/>
</g>
<g filter="url(#bl2)">
<path d="M7 52 Q29 46 52 52 L51 72 H8 Z" fill="#9a998c"/>
<path d="M7 52 Q29 45.5 52 52 L52 53.8 Q29 48 7 53.8 Z" fill="#3c3d3a"/>
<path d="M9 57 Q29 54 50 57 M9 61 Q29 58.5 50 61 M9 65 Q29 63 50 65 M9 69 Q29 67 50 69" stroke="#76756a" stroke-width="1.1" fill="none"/>
<rect x="56" y="59" width="14" height="13" fill="#5c4839"/><rect x="66.5" y="53" width="1" height="8" fill="#4a3a30"/>
<rect x="62" y="59" width="2" height="13" fill="#8d8478"/>
<rect x="74.5" y="53" width="10.5" height="19" fill="#2c2e2c"/>
<rect x="77" y="62" width="5" height="4" fill="#7e807a"/>
</g>
<g filter="url(#bl4)"><path d="M-2 62 L3 61 L7 67 L12 66 L18 69 L26 68 L35 70 L45 69 L52 68 L60 66 L68 68 L76 66 L87 67 V88 H-2 Z" fill="#3f5a37"/>
<path d="M-2 74 H87 V86 H-2 Z" fill="#2f442a"/>
<path d="M4 68 V82 M12 70 V82 M21 71 V82 M30 71 V82 M40 71 V82 M50 71 V82" stroke="#6f8a60" stroke-width="1.6" opacity=".55"/>
<path d="M60 70 V82 M70 70 V82 M79 70 V82" stroke="#566e4a" stroke-width="1.4" opacity=".4"/></g>
<rect y="83.5" width="85" height="16.5" fill="url(#grs)"/>
<rect y="83" width="85" height="1" fill="#6c7c55" opacity=".7"/>
</svg><span>测试</span></div></td>
          <td><span class="y">¥</span>299</td><td>1</td><td><span class="y">¥</span>299</td><td>北京市朝<br>阳路1号</td><td>1380000<br>0000</td><td>001</td><td>2025-03<br>-01 16:1<br>4:27</td><td></td><td></td><td></td>
          <td><div class="ops"><span class="btn o">物流</span><span class="btn g">确认收货</span></div></td>
        </tr>
        <tr class="s">
          <td>2025311<br>6104144<br>0</td>
          <td><div class="goods"><svg viewBox="0 0 85 100"><use href="#drops"/></svg><span>测试</span></div></td>
          <td><span class="y">¥</span>88</td><td>1</td><td><span class="y">¥</span>88</td><td>北京市朝<br>阳路1号</td><td>1380000<br>0000</td><td>001</td><td>2025-03<br>-01 16:1<br>4:27</td><td></td><td></td><td></td>
          <td><div class="ops"><span class="btn g">确认收货</span></div></td>
        </tr>
        <tr>
          <td>2025311<br>6103129<br>1</td>
          <td><div class="goods"><svg viewBox="0 0 85 100"><use href="#drops"/></svg><span>测试</span></div></td>
          <td><span class="y">¥</span>88</td><td>1</td><td><span class="y">¥</span>88</td><td>北京市朝<br>阳路1号</td><td>1380000<br>0000</td><td>001</td><td>2025-03<br>-01 16:1<br>4:17</td><td></td><td></td><td></td>
          <td><div class="ops"><span class="btn g">确认收货</span></div></td>
        </tr>
      </tbody>
    </table>
    <div class="sb"><span class="l"></span><span class="th"></span><span class="r"></span></div>
  </div>

  <div class="toast">
    <svg viewBox="0 0 14 14"><circle cx="7" cy="7" r="7" fill="#52972b"/><path d="M3.8 7.2 L6.1 9.4 L10.2 5.2" fill="none" stroke="#c4d4b8" stroke-width="1.5"/></svg>确认收货成功
  </div>

  <div class="dlg">
    <div class="t">提示</div>
    <svg class="x" viewBox="0 0 14 14"><path d="M2 2 L12 12 M12 2 L2 12" stroke="rgba(140,142,148,.5)" stroke-width="1.2"/></svg>
    <div class="ic">!</div>
    <div class="m">是否确定收货?</div>
    <div class="b1">取消</div>
    <div class="b2">确定</div>
  </div>

  <svg class="cursor" viewBox="0 0 14 22"><path d="M1 1 V17 L4.8 13.4 L7.6 20 L10 19 L7.2 12.6 H12.4 Z" fill="#fff" stroke="#111" stroke-width="1.1"/></svg>

  <div class="bot1"></div><div class="bot2"></div>
</div>
</body>
</html>
